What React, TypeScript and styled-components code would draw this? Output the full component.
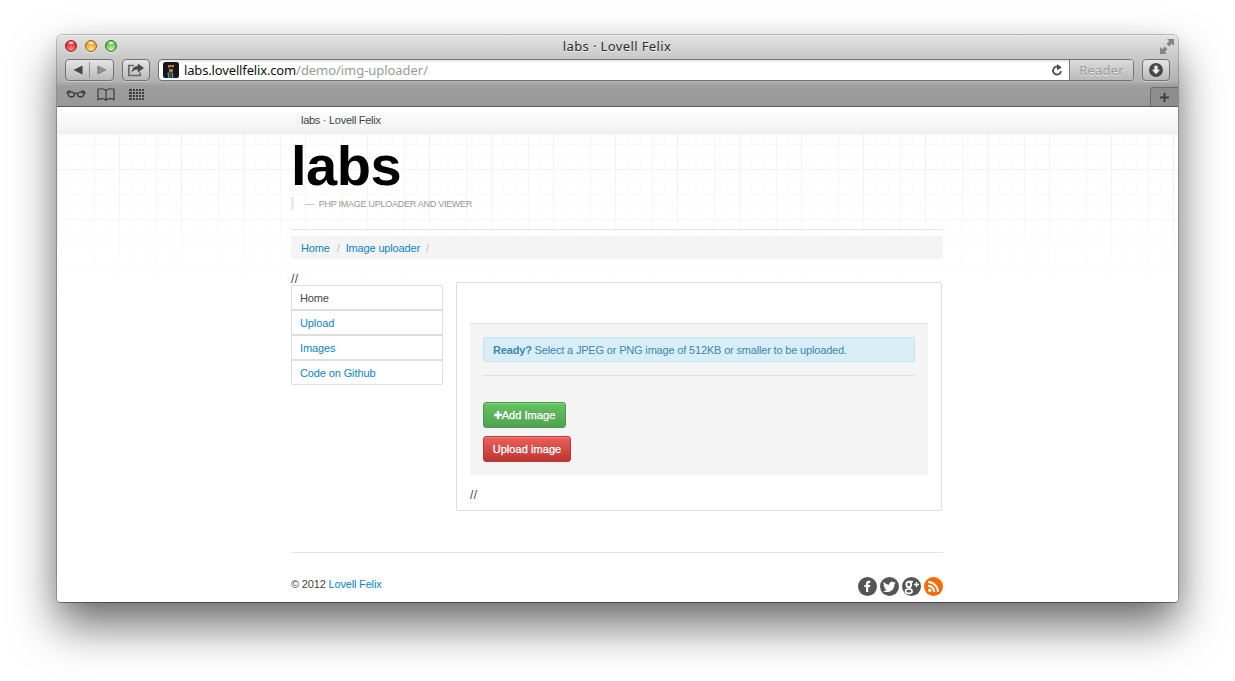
import React from "react";
import styled, { createGlobalStyle } from "styled-components";

const Global = createGlobalStyle`
  * { box-sizing: border-box; }
  html, body { margin: 0; padding: 0; background: #fff; overflow: hidden; }
  a { color: #0d84c6; text-decoration: none; }
`;

const Desktop = styled.div`
  width: 1235px;
  height: 681px;
  padding: 35px 57px 0;
  background: #fff;
  overflow: hidden;
`;

const Window = styled.div`
  width: 1121px;
  height: 567px;
  display: flex;
  flex-direction: column;
  border-radius: 5px 5px 4px 4px;
  overflow: hidden;
  background: #fff;
  box-shadow: 0 0 0 1px rgba(0, 0, 0, 0.22), 0 1px 0 rgba(0, 0, 0, 0.25),
    0 4px 20px rgba(0, 0, 0, 0.08), 0 24px 46px rgba(0, 0, 0, 0.56);
`;

const Chrome = styled.header`
  height: 72px;
  flex: none;
  display: flex;
  flex-direction: column;
  border-bottom: 1px solid #5b5b5b;
  background: linear-gradient(#ededed 0, #e0e0e0 2px, #c8c8c8 24px, #b2b2b2 46px, #9e9e9e 51px, #979797 71px);
  font-family: "Noto Sans", sans-serif;
`;

const TitleBar = styled.div`
  height: 23px;
  display: grid;
  grid-template-columns: 80px 1fr 86px;
  align-items: center;
  padding: 0 3px 0 8px;
`;

const Lights = styled.div`
  display: flex;
  gap: 8px;
`;

const Light = styled.span<{ $rim: string; $base: string; $glow: string }>`
  width: 12px;
  height: 12px;
  margin-top: -1px;
  border-radius: 50%;
  border: 1px solid ${(p) => p.$rim};
  background: radial-gradient(ellipse 4px 2px at 50% 18%, #fff 0, transparent 100%),
    radial-gradient(circle at 50% 85%, ${(p) => p.$glow} 0, ${(p) => p.$base} 75%);
  box-shadow: 0 1px 0 rgba(255, 255, 255, 0.5);
`;

const WindowTitle = styled.div`
  padding-bottom: 2px;
  text-align: center;
  font: 13px/18px "Noto Sans", sans-serif;
  letter-spacing: 0.38px;
  color: #2c2c2c;
  text-shadow: 0 1px 0 rgba(255, 255, 255, 0.6);
`;

const Corner = styled.div`
  display: flex;
  justify-content: flex-end;
`;

const Toolbar = styled.div`
  height: 24px;
  display: flex;
  align-items: center;
  padding: 0 8px;
`;

const ToolButton = styled.div<{ $width: number; $left?: number }>`
  width: ${(p) => p.$width}px;
  height: 22px;
  margin-left: ${(p) => p.$left ?? 0}px;
  flex: none;
  display: flex;
  align-items: center;
  justify-content: center;
  border: 1px solid #727272;
  border-radius: 4px;
  background: linear-gradient(#e6e6e6, #b9b9b9);
  box-shadow: 0 1px 0 rgba(255, 255, 255, 0.35);
`;

const Half = styled.span<{ $divided?: boolean }>`
  flex: 1;
  height: 16px;
  display: flex;
  align-items: center;
  justify-content: center;
  border-left: ${(p) => (p.$divided ? "1px solid #919191" : "0")};
`;

const AddressBar = styled.div`
  flex: 1;
  height: 22px;
  margin-left: 8px;
  display: flex;
  align-items: center;
  border: 1px solid #727272;
  border-radius: 4px;
  background: linear-gradient(#e4e4e4, #fff 3px);
  overflow: hidden;
`;

const Favicon = styled.svg`
  flex: none;
  margin-left: 4px;
`;

const Address = styled.div`
  flex: 1;
  margin-left: 5px;
  font-size: 13px;
  line-height: 18px;
  letter-spacing: -0.15px;
  white-space: nowrap;
  color: #111;
`;

const AddressPath = styled.span`
  color: #9a9a9a;
  letter-spacing: -0.05px;
`;

const Reader = styled.div`
  width: 64px;
  height: 20px;
  margin-left: 6px;
  border-left: 1px solid #777;
  background: linear-gradient(#dcdcdc, #bababa);
  text-align: center;
  font-size: 13px;
  letter-spacing: 0.2px;
  line-height: 20px;
  color: #9c9c9c;
  text-shadow: 0 1px 0 #e4e4e4;
`;

const BookmarkBar = styled.div`
  height: 24px;
  display: flex;
  align-items: center;
  padding-left: 9px;
`;

const BookmarkIcons = styled.div`
  flex: 1;
  display: flex;
  align-items: center;
  gap: 11px;
`;

const NewTab = styled.div`
  width: 28px;
  height: 19px;
  align-self: flex-end;
  display: flex;
  align-items: center;
  justify-content: center;
  border: 1px solid #6a6a6a;
  border-width: 1px 0 0 1px;
  border-radius: 4px 0 0 0;
  background: #8e8e8e;
`;

const Page = styled.main`
  flex: 1;
  min-height: 0;
  font-family: "Liberation Sans", Arial, sans-serif;
  font-size: 11px;
  line-height: 14px;
  color: #444;
`;

const Nav = styled.nav`
  height: 27px;
  padding-left: 244px;
  line-height: 27px;
  letter-spacing: -0.28px;
  background: linear-gradient(#fff, #f0f0f0);
  box-shadow: 0 1px 3px rgba(0, 0, 0, 0.05);
`;

const Paper = styled.div`
  height: 468px;
  background: linear-gradient(rgba(255, 255, 255, 0) 50px, #fff 162px),
    linear-gradient(90deg, #f2f2f2 1px, transparent 1px) 0 0 / 62px 100%,
    linear-gradient(90deg, #f5f5f5 1px, transparent 1px) 37px 0 / 62px 100%,
    linear-gradient(90deg, #fafafa 1px, transparent 1px) 12px 0 / 62px 100%,
    linear-gradient(90deg, #fafafa 1px, transparent 1px) 25px 0 / 62px 100%,
    linear-gradient(90deg, #fafafa 1px, transparent 1px) 49px 0 / 62px 100%,
    linear-gradient(#f3f3f3 1px, transparent 1px) 0 35px / 100% 50px,
    linear-gradient(#f8f8f8 1px, transparent 1px) 0 10px / 100% 25px,
    linear-gradient(#fbfbfb 1px, transparent 1px) 0 23px / 100% 25px;
`;

const Container = styled.div`
  width: 652px;
  margin-left: 234px;
`;

const Heading = styled.h1`
  height: 63px;
  margin: 0;
  font-size: 56px;
  line-height: 64px;
  letter-spacing: -0.5px;
  color: #000;
`;

const Tagline = styled.blockquote`
  height: 13px;
  margin: 0;
  padding-left: 11px;
  border-left: 3px solid #eaeaea;
  display: flex;
  gap: 5px;
  font-size: 9px;
  line-height: 14px;
  letter-spacing: -0.26px;
  color: #969696;
  white-space: nowrap;
`;

const Rule = styled.hr<{ $top: number; $bottom: number; $color?: string }>`
  height: 1px;
  margin: ${(p) => p.$top}px 0 ${(p) => p.$bottom}px;
  border: 0;
  background: ${(p) => p.$color ?? "#e5e5e5"};
`;

const Breadcrumb = styled.div`
  height: 23px;
  padding-left: 10px;
  display: flex;
  gap: 6px;
  border-radius: 2px;
  background: #f4f4f4;
  line-height: 24px;
  letter-spacing: -0.15px;
  color: #bbb;
`;

const Crumb = styled.a`
  &:first-child { margin-right: 1px; }
`;

const Columns = styled.div`
  height: 293px;
  display: flex;
  gap: 13px;
`;

const Slashes = styled.div`
  font-size: 12px;
  letter-spacing: 0.4px;
`;

const Sidebar = styled.aside`
  width: 152px;
  padding-top: 13px;
`;

const SideMenu = styled.ul`
  margin: -1px 0 0;
  padding: 0;
  list-style: none;
`;

const SideItem = styled.li`
  height: 25px;
  padding-left: 8px;
  border: 1px solid #ddd;
  background: #fff;
  line-height: 24px;
  letter-spacing: -0.12px;
  &:first-child { border-radius: 2px 2px 0 0; }
  &:last-child { border-radius: 0 0 2px 2px; }
`;

const Card = styled.section`
  width: 486px;
  height: 229px;
  margin-top: 23px;
  padding: 40px 13px 0;
  border: 1px solid #ddd;
  border-radius: 2px;
  background: #fff;
`;

const Form = styled.div`
  height: 152px;
  margin-bottom: 13px;
  padding: 13px;
  border-top: 1px solid #e0e0e0;
  background: #f4f4f4;
`;

const Notice = styled.div`
  height: 25px;
  padding-left: 9px;
  border: 1px solid #bce8f1;
  border-radius: 2px;
  background: #d9edf7;
  line-height: 24px;
  letter-spacing: -0.17px;
  color: #3a87ad;
  white-space: nowrap;
`;

const Actions = styled.div`
  display: flex;
  flex-direction: column;
  align-items: flex-start;
  gap: 8px;
`;

const Action = styled.button<{ $width: number; $from: string; $to: string; $edge: string }>`
  width: ${(p) => p.$width}px;
  height: 26px;
  padding: 0;
  display: flex;
  align-items: center;
  justify-content: center;
  border: 1px solid ${(p) => p.$edge};
  border-radius: 3px;
  background: linear-gradient(${(p) => p.$from}, ${(p) => p.$to});
  box-shadow: inset 0 1px 0 rgba(255, 255, 255, 0.2);
  color: #fff;
  font: 11px "Liberation Sans", Arial, sans-serif;
  letter-spacing: 0.06px;
  -webkit-text-stroke: 0.3px #fff;
  text-shadow: 0 -1px 0 rgba(0, 0, 0, 0.25);
`;

const Footer = styled.footer`
  display: flex;
  justify-content: space-between;
  align-items: flex-start;
  letter-spacing: -0.17px;
`;

const Social = styled.div`
  display: flex;
  gap: 3px;
`;

const SocialIcon = ({ color = "#555", children }: { color?: string; children: React.ReactNode }) => (
  <svg width="19" height="19" viewBox="0 0 19 19">
    <circle cx="9.5" cy="9.5" r="9.5" fill={color} />
    {children}
  </svg>
);

export default function App() {
  return (
    <Desktop>
      <Global />
      <Window>
        <Chrome>
          <TitleBar>
            <Lights>
              <Light $rim="#8f2222" $base="#e01c2c" $glow="#ff8a8a" />
              <Light $rim="#96601b" $base="#ee9a20" $glow="#ffe38a" />
              <Light $rim="#35762a" $base="#58b645" $glow="#c6f7a8" />
            </Lights>
            <WindowTitle>labs · Lovell Felix</WindowTitle>
            <Corner>
              <svg width="16" height="16" viewBox="0 0 16 16" fill="#858585">
                <path d="M8 0h7v7l-2.200-2.200-2.600 2.600-2.600-2.600L10.200 2.200zM1 8l2.200 2.200 2.600-2.600 2.600 2.600-2.600 2.600L8 15H1z" />
              </svg>
            </Corner>
          </TitleBar>
          <Toolbar>
            <ToolButton $width={49}>
              <Half>
                <svg width="10" height="10" viewBox="0 0 10 10"><path d="M0.500 5L9.500 0.500v9z" fill="#454545" /></svg>
              </Half>
              <Half $divided>
                <svg width="10" height="10" viewBox="0 0 10 10"><path d="M9 5L0.800 1v8z" fill="#929292" stroke="#777" strokeWidth=".7" /></svg>
              </Half>
            </ToolButton>
            <ToolButton $width={28} $left={8}>
              <svg width="18" height="14" viewBox="0 0 18 14">
                <path d="M7 2.500H1.800v10h11.400V9.500" fill="none" stroke="#666" strokeWidth="1.700" />
                <path d="M4.600 10c.2-4.600 2.500-6.800 6.200-6.900V.4L17 5l-6.200 4.400V6.600C8.100 6.600 6 7.500 4.600 10z" fill="#4b4b4b" />
              </svg>
            </ToolButton>
            <AddressBar>
              <Favicon width="16" height="16" viewBox="0 0 16 16">
                <rect width="16" height="16" rx="2.500" fill="#171717" />
                <path d="M5 3h6v3H5zM6 7h4v3.500H6z" fill="#b17b49" />
                <path d="M6 5h5v1.200H6z" fill="#33261b" />
                <path d="M4.500 10.500h1.600V16H5zM9 11h1.200v5H9z" fill="#1bb0c0" />
                <path d="M6.500 10.500h2V16h-2z" fill="#74492c" />
              </Favicon>
              <Address>labs.lovellfelix.com<AddressPath>/demo/img-uploader/</AddressPath></Address>
              <svg width="12" height="13" viewBox="0 0 12 13">
                <path d="M8.400 3.400A4 4 0 1 0 10 7.200" fill="none" stroke="#4b4b4b" strokeWidth="1.800" />
                <path d="M6 0l4.800 3.500L6 6.200z" fill="#4b4b4b" />
              </svg>
              <Reader>Reader</Reader>
            </AddressBar>
            <ToolButton $width={28} $left={8}>
              <svg width="14" height="14" viewBox="0 0 14 14">
                <circle cx="7" cy="7" r="7" fill="#484848" />
                <path d="M5.400 2.700h3.200v4h2.500L7 11.300 2.900 6.700h2.500z" fill="#eee" />
              </svg>
            </ToolButton>
          </Toolbar>
          <BookmarkBar>
            <BookmarkIcons>
              <svg width="20" height="12" viewBox="0 0 20 12" fill="none" stroke="#3c3c3c" strokeWidth="1.300">
                <path d="M5 3.200H2.500L1 4.600M15 3.200h2.500L19 4.600M8.500 5.700q1.500-1.200 3 0M.5 5h2M17.500 5h2" />
                <ellipse cx="5.400" cy="6.600" rx="3.100" ry="2.400" />
                <ellipse cx="14.600" cy="6.600" rx="3.100" ry="2.400" />
              </svg>
              <svg width="18" height="13" viewBox="0 0 18 13" fill="none" stroke="#3c3c3c" strokeWidth="1.200">
                <path d="M9 2.500Q6-.2 1 1.300V11.700Q6 9.500 9 12.200q3-2.700 8-.5V1.300Q12-.2 9 2.500zV12" />
              </svg>
              <svg width="19" height="11" viewBox="-3 0 19 11" fill="#3c3c3c" shapeRendering="crispEdges">
                {[0, 3, 6, 9].map((y) => [0, 4, 7, 10, 13].map((x) => (
                  <rect key={`${x}-${y}`} x={x} y={y} width={x === 0 ? 3 : 2} height="2" />
                )))}
              </svg>
            </BookmarkIcons>
            <NewTab>
              <svg width="9" height="9" viewBox="0 0 9 9"><path d="M4.500 0v9M0 4.500h9" stroke="#3e3e3e" strokeWidth="2" /></svg>
            </NewTab>
          </BookmarkBar>
        </Chrome>
        <Page>
          <Nav>labs · Lovell Felix</Nav>
          <Paper>
            <Container>
              <Heading>labs</Heading>
              <Tagline><span>—</span><span>PHP IMAGE UPLOADER AND VIEWER</span></Tagline>
              <Rule $top={19} $bottom={6} />
              <Breadcrumb>
                <Crumb>Home</Crumb><span>/</span><Crumb>Image uploader</Crumb><span>/</span>
              </Breadcrumb>
              <Columns>
                <Sidebar>
                  <Slashes>//</Slashes>
                  <SideMenu>
                    <SideItem>Home</SideItem>
                    <SideItem><a>Upload</a></SideItem>
                    <SideItem><a>Images</a></SideItem>
                    <SideItem><a>Code on Github</a></SideItem>
                  </SideMenu>
                </Sidebar>
                <Card>
                  <Form>
                    <Notice><b>Ready?</b> Select a JPEG or PNG image of 512KB or smaller to be uploaded.</Notice>
                    <Rule $top={13} $bottom={26} $color="#e0e0e0" />
                    <Actions>
                      <Action $width={83} $from="#62c462" $to="#51a351" $edge="#4b9a4b">
                        <svg width="8" height="8" viewBox="0 0 8 8"><path d="M4 0v8M0 4h8" stroke="#fff" strokeWidth="2.400" /></svg>
                        Add Image
                      </Action>
                      <Action $width={88} $from="#ee5f5b" $to="#bd362f" $edge="#b3393a">Upload image</Action>
                    </Actions>
                  </Form>
                  <Slashes>//</Slashes>
                </Card>
              </Columns>
              <Rule $top={0} $bottom={24} />
              <Footer>
                <span>© 2012 <a>Lovell Felix</a></span>
                <Social>
                  <SocialIcon>
                    <path d="M8 15V10H6.300V7.900H8V6.500C8 4.700 9 3.800 10.500 3.800H12.300v2.100h-1.200c-.6 0-.8.200-.8.800v1.200h2l-.2 2.100h-1.800v5z" fill="#fff" />
                  </SocialIcon>
                  <SocialIcon>
                    <path transform="translate(-1.600 -1.300) scale(1.160)" d="M15 6.100c-.4.200-.8.300-1.300.4.500-.3.800-.7 1-1.200-.4.200-.9.400-1.400.5a2.300 2.300 0 0 0-3.900 2.100C7.500 7.800 5.800 6.900 4.700 5.500c-.6 1-.3 2.300.7 3-.4 0-.7-.1-1-.3 0 1.100.8 2 1.800 2.300-.3.100-.7.100-1 0 .3.900 1.100 1.500 2.100 1.600-1 .8-2.100 1.100-3.400 1 4.700 2.800 10-.3 9.900-5.700.5-.4.900-.8 1.200-1.300z" fill="#fff" />
                  </SocialIcon>
                  <SocialIcon>
                    <g fill="none" stroke="#fff">
                      <ellipse cx="6.800" cy="7.400" rx="2.400" ry="2.700" strokeWidth="1.900" />
                      <path d="M7 4.600h4M8.200 9.800c-1.800 1.200-.6 1.600.6 2.500" strokeWidth="1.600" />
                      <path d="M14.500 5v5M12 7.500h5" strokeWidth="1.500" />
                      <ellipse cx="6.800" cy="14.200" rx="3.300" ry="2.200" strokeWidth="1.700" />
                    </g>
                  </SocialIcon>
                  <SocialIcon color="#ff6a00">
                    <circle cx="5.700" cy="13.300" r="1.700" fill="#fff" />
                    <path d="M4 8.700a6.200 6.200 0 0 1 6.200 6.200M4 5a10 10 0 0 1 10 10" fill="none" stroke="#fff" strokeWidth="2" />
                  </SocialIcon>
                </Social>
              </Footer>
            </Container>
          </Paper>
        </Page>
      </Window>
    </Desktop>
  );
}
